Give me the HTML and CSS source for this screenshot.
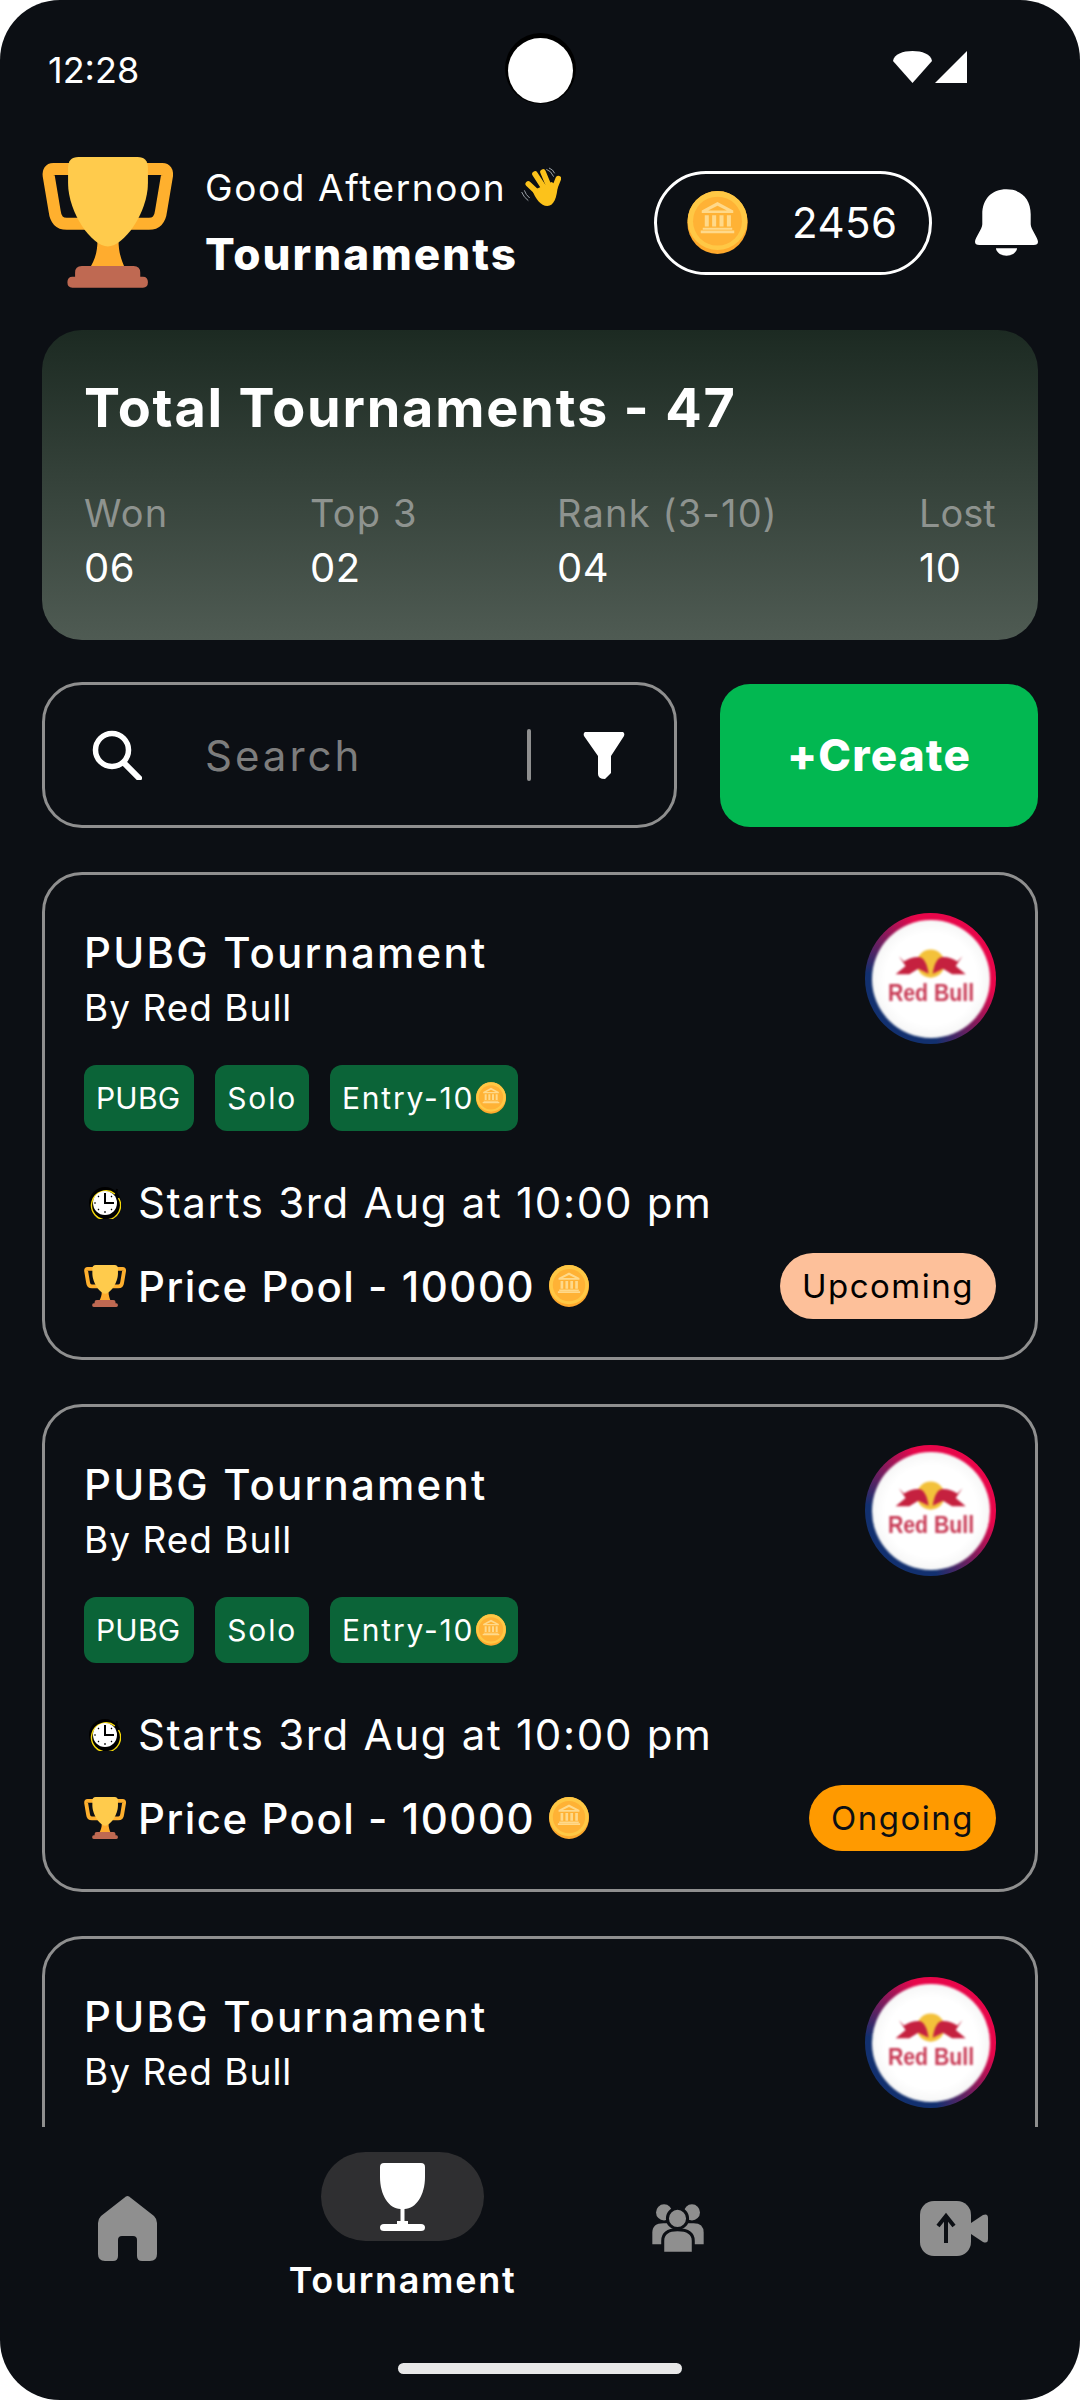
FILE: index.html
```html
<!DOCTYPE html>
<html lang="en">
<head>
<meta charset="utf-8">
<title>Tournaments</title>
<link rel="stylesheet" href="styles.css">
</head>
<body>
<svg class="defs" width="0" height="0" aria-hidden="true">
  <symbol id="trophy" viewBox="66 52 392 392">
    <path class="t-handle" d="M160 88H100Q84 88 86 108L104 215Q108 252 140 252H210"/>
    <path class="t-handle" d="M366 88H426Q442 88 440 108L422 215Q418 252 386 252H316"/>
    <path fill="#ffac2e" d="M232 300H295C295 340 305 365 315 385H208C222 365 232 340 232 300Z"/>
    <path fill="#ffcb4c" d="M175 52H352Q383 52 383 85V130C383 220 310 320 263 320C216 320 144 220 144 130V85Q144 52 175 52Z"/>
    <path fill="#bf6952" d="M185 378H340Q360 378 360 398V410H368Q383 410 383 427Q383 443 368 443H157Q142 443 142 427Q142 410 157 410H165V398Q165 378 185 378Z"/>
  </symbol>
  <symbol id="coin" viewBox="0 0 180 188">
    <ellipse cx="90" cy="94" rx="90" ry="94" fill="#ffa92c"/>
    <ellipse cx="90" cy="88" rx="89" ry="88" fill="#ffc845"/>
    <circle cx="90" cy="90" r="73" fill="#ffb235"/>
    <path fill="#ffd98a" d="M90 33L137 58V66H43V58ZM90 44L62 58H118Z"/>
    <path fill="#ffd98a" d="M52 72H64V106H52ZM74 72H86V106H74ZM96 72H108V106H96ZM118 72H130V106H118ZM46 110H134V116H46ZM40 118H140V126H40Z"/>
  </symbol>
  <symbol id="clock" viewBox="0 0 32 33">
    <circle cx="16" cy="17" r="16" fill="#000"/>
    <path d="M26 8A14.500 14.500 0 1 0 29.500 12" fill="none" stroke="#f5d90a" stroke-width="1.400"/>
    <path d="M27 9L28 3" stroke="#000" stroke-width="2"/>
    <circle cx="16" cy="17" r="12" fill="#fff"/>
    <path d="M16 7V17H25" fill="none" stroke="#000" stroke-width="2"/>
    <path d="M16 25v2M5 17h2M9 10l1 1M23 10l-1 1M9 24l1-1M23 24l-1-1" stroke="#000" stroke-width="1.200"/>
  </symbol>
  <symbol id="bulls" viewBox="64.500 59.500 353 353">
    <circle cx="240" cy="190" r="42" fill="#f3c13a"/>
    <path fill="#c5213f" d="M135 222L165 197L145 168L160 184Q178 170 203 170Q226 170 234 220L203 205L176 222Z"/>
    <path fill="#c5213f" d="M345 222L315 197L335 168L320 184Q302 170 277 170Q254 170 246 220L277 205L304 222Z"/>
  </symbol>
</svg>

<main class="screen">
  <div class="status">
    <span class="time">12:28</span>
    <span class="camera"></span>
    <div class="status-icons">
      <svg class="wifi" viewBox="0 0 39 32"><path fill="#fff" d="M0 10C1 3 10 0 19.500 0C29 0 38 3 39 10L19.500 32Z"/></svg>
      <svg class="signal" viewBox="0 0 32 32"><path fill="#fff" d="M32 0V32H0Z"/></svg>
    </div>
  </div>

  <header class="header">
    <svg class="hero-trophy"><use href="#trophy"/></svg>
    <div class="greet">
      <div class="greet-line">
        <span>Good Afternoon</span>
        <svg class="hand" viewBox="36 25 120 120">
          <g stroke="#fcc21b" stroke-width="17" stroke-linecap="round" fill="none">
            <path d="M58 76L92 108"/>
            <path d="M78 46L108 92"/>
            <path d="M102 40L122 88"/>
            <path d="M148 60L132 100"/>
          </g>
          <path fill="#fcc21b" d="M80 92L128 70L146 82C144 115 135 142 115 142C95 142 80 120 72 100Z"/>
          <path d="M38 100Q44 116 58 126M46 95Q50 108 62 118M112 32Q126 36 134 54M120 28Q132 32 137 44" fill="none" stroke="#9aa0a6" stroke-width="3"/>
        </svg>
      </div>
      <div class="greet-title">Tournaments</div>
    </div>
    <div class="balance">
      <svg class="balance-coin"><use href="#coin"/></svg>
      <span class="balance-value">2456</span>
    </div>
    <svg class="bell" viewBox="945 120 190 200"><path fill="#fff" d="M1040 120C1085 120 1113 150 1113 195V225C1113 240 1135 265 1135 278Q1135 288 1122 288H958Q945 288 945 278C945 265 967 240 967 225V195C967 150 995 120 1040 120ZM1008 298H1072C1070 312 1056 320 1040 320C1024 320 1010 312 1008 298Z"/></svg>
  </header>

  <section class="stats">
    <h1 class="stats-title">Total Tournaments - 47</h1>
    <div class="stats-grid">
      <div><div class="stat-label">Won</div><div class="stat-value">06</div></div>
      <div><div class="stat-label">Top 3</div><div class="stat-value">02</div></div>
      <div><div class="stat-label">Rank (3-10)</div><div class="stat-value">04</div></div>
      <div><div class="stat-label stat-tight">Lost</div><div class="stat-value">10</div></div>
    </div>
  </section>

  <div class="tools">
    <div class="search">
      <svg class="search-icon" viewBox="0 0 50 50"><circle cx="20" cy="20" r="16.500" fill="none" stroke="#fff" stroke-width="5.500"/><path d="M32 33L47 48" stroke="#fff" stroke-width="6" stroke-linecap="round"/></svg>
      <span class="search-text">Search</span>
      <span class="divider"></span>
      <svg class="filter" viewBox="0 0 42 47"><path fill="#fff" d="M2 0H40Q42 1 41 4L28 24V41L22 47Q15 47 15 42V24L1 4Q0 1 2 0Z"/></svg>
    </div>
    <button class="create">+Create</button>
  </div>

  <div class="list">
    <article class="card">
      <div class="card-top">
        <div>
          <div class="card-title">PUBG Tournament</div>
          <div class="card-by">By Red Bull</div>
          <div class="tags">
            <span class="tag tag-caps">PUBG</span><span class="tag">Solo</span>
            <span class="tag">Entry-10<svg class="tag-coin"><use href="#coin"/></svg></span>
          </div>
        </div>
        <div class="logo"><svg viewBox="64.500 59.500 353 353"><use href="#bulls" x="64.500" y="59.500" width="353" height="353"/><text class="logo-text" x="241" y="302" text-anchor="middle" textLength="258" lengthAdjust="spacingAndGlyphs">Red Bull</text></svg></div>
      </div>
      <div class="starts"><span class="slot"><svg class="clock"><use href="#clock"/></svg></span>Starts 3rd Aug at 10:00 pm</div>
      <div class="bottom">
        <div class="pool"><span class="slot"><svg class="mini-trophy"><use href="#trophy"/></svg></span>Price Pool - 10000<svg class="pool-coin"><use href="#coin"/></svg></div>
        <span class="state state-up">Upcoming</span>
      </div>
    </article>

    <article class="card">
      <div class="card-top">
        <div>
          <div class="card-title">PUBG Tournament</div>
          <div class="card-by">By Red Bull</div>
          <div class="tags">
            <span class="tag tag-caps">PUBG</span><span class="tag">Solo</span>
            <span class="tag">Entry-10<svg class="tag-coin"><use href="#coin"/></svg></span>
          </div>
        </div>
        <div class="logo"><svg viewBox="64.500 59.500 353 353"><use href="#bulls" x="64.500" y="59.500" width="353" height="353"/><text class="logo-text" x="241" y="302" text-anchor="middle" textLength="258" lengthAdjust="spacingAndGlyphs">Red Bull</text></svg></div>
      </div>
      <div class="starts"><span class="slot"><svg class="clock"><use href="#clock"/></svg></span>Starts 3rd Aug at 10:00 pm</div>
      <div class="bottom">
        <div class="pool"><span class="slot"><svg class="mini-trophy"><use href="#trophy"/></svg></span>Price Pool - 10000<svg class="pool-coin"><use href="#coin"/></svg></div>
        <span class="state state-on">Ongoing</span>
      </div>
    </article>

    <article class="card">
      <div class="card-top">
        <div>
          <div class="card-title">PUBG Tournament</div>
          <div class="card-by">By Red Bull</div>
        </div>
        <div class="logo"><svg viewBox="64.500 59.500 353 353"><use href="#bulls" x="64.500" y="59.500" width="353" height="353"/><text class="logo-text" x="241" y="302" text-anchor="middle" textLength="258" lengthAdjust="spacingAndGlyphs">Red Bull</text></svg></div>
      </div>
    </article>
  </div>

  <nav class="nav">
    <div class="nav-row">
      <div class="nav-item">
        <svg class="i-home" viewBox="0 0 59 65"><path fill="#8f8f8f" d="M29.500 0Q31 0 33 2L56 20Q59 23 59 27V58Q59 65 52 65H44Q39 65 39 60V44Q39 40 35 40H24Q20 40 20 44V60Q20 65 15 65H7Q0 65 0 58V27Q0 23 3 20L26 2Q28 0 29.500 0Z"/></svg>
      </div>
      <div class="nav-item nav-active">
        <span class="nav-pill">
          <svg class="i-cup" viewBox="0 0 45 68"><path fill="#fff" d="M4 0H41Q45 0 45 4V14C45 32 36 46 24.500 46V58H28V61H41Q45 61 45 64.500Q45 68 41 68H4Q0 68 0 64.500Q0 61 4 61H17V58H20.500V46C9 46 0 32 0 14V4Q0 0 4 0Z"/></svg>
        </span>
        <span class="nav-label">Tournament</span>
      </div>
      <div class="nav-item">
        <svg class="i-people" viewBox="37 45 153 143">
          <g fill="#8f8f8f">
            <circle cx="72" cy="70" r="24"/><circle cx="155" cy="70" r="24"/>
            <path d="M37 165V130Q37 102 70 102H160Q190 102 190 130V165Z"/>
          </g>
          <g fill="#8f8f8f" stroke="#0c0f14" stroke-width="9">
            <circle cx="112" cy="88" r="30"/>
            <path d="M68 192V155Q68 122 112 122Q159 122 159 155V192Z"/>
          </g>
        </svg>
      </div>
      <div class="nav-item">
        <svg class="i-video" viewBox="0 0 68 55">
          <rect width="51" height="55" rx="14" fill="#8f8f8f"/>
          <path fill="#8f8f8f" d="M51 22L63 14Q68 12 68 17V38Q68 43 63 41L51 33Z"/>
          <path d="M26 42V16M18 25L26 15L34 25" fill="none" stroke="#0c0f14" stroke-width="4"/>
        </svg>
      </div>
    </div>
    <div class="home-bar"></div>
  </nav>
</main>
</body>
</html>
```

FILE: styles.css
```css
* { box-sizing: border-box; }
html, body { margin: 0; background: #fff; }
body { width: 1080px; height: 2400px; font-family: Inter, "Noto Sans", sans-serif; color: #fff; overflow: hidden; }
.defs { display: block; height: 0; }
.t-handle { fill: none; stroke: #ffb02e; stroke-width: 36; }

.screen { width: 1080px; height: 2400px; background: #0c0f14; border-radius: 60px; overflow: hidden; display: flex; flex-direction: column; }

.status { height: 140px; display: grid; grid-template-columns: 1fr auto 1fr; align-items: center; margin-bottom: 17px; }
.time { padding-left: 48px; font-size: 36px; }
.camera { width: 65px; height: 65px; border-radius: 50%; background: #fff; box-shadow: 0 -2px 0 3px #000; }
.status-icons { justify-self: end; align-self: start; margin-top: 51px; padding-right: 113px; display: flex; gap: 3px; }
.wifi { width: 39px; height: 32px; }
.signal { width: 32px; height: 32px; }

.header { height: 131px; margin: 0 42px; display: flex; align-items: center; }
.hero-trophy { width: 131px; height: 131px; flex: none; }
.greet { margin-left: 32px; display: flex; flex-direction: column; gap: 19px; }
.greet-line { display: flex; align-items: center; gap: 15px; height: 44px; font-size: 37px; letter-spacing: 1.600px; }
.hand { width: 40px; height: 40px; }
.greet-title { font-size: 44px; line-height: 52px; font-weight: 800; letter-spacing: 2px; }
.balance { margin-left: auto; width: 278px; height: 104px; border: 3px solid #fff; border-radius: 52px; padding-left: 30px; display: flex; align-items: center; gap: 44px; }
.balance-coin { width: 61px; height: 63px; flex: none; }
.balance-value { font-size: 42px; letter-spacing: .5px; }
.bell { width: 63px; height: 67px; margin-left: 43px; flex: none; }

.stats { margin: 42px 42px 0; height: 310px; border-radius: 40px; background: linear-gradient(180deg, #1c2a22, #4f5b53); padding: 46px 42px 0; }
.stats-title { margin: 0; font-size: 54px; line-height: 64px; font-weight: 700; letter-spacing: 1.800px; }
.stats-grid { margin-top: 51px; display: grid; grid-template-columns: 226px 247px 362px auto; }
.stat-label { font-size: 38px; line-height: 44px; color: #8e938f; letter-spacing: 1.200px; }
.stat-tight { letter-spacing: 0; }
.stat-value { margin-top: 9px; font-size: 40px; line-height: 48px; letter-spacing: .5px; }

.tools { margin: 42px 42px 0; height: 146px; display: flex; align-items: center; }
.search { width: 635px; height: 146px; flex: none; border: 3px solid #8f8f8f; border-radius: 40px; padding: 0 49px 0 47px; display: flex; align-items: center; }
.search-icon { width: 50px; height: 50px; flex: none; }
.search-text { margin-left: 63px; flex: 1; font-size: 42px; color: #7d7d7d; letter-spacing: 3px; }
.divider { width: 4px; height: 52px; background: #8f8f8f; border-radius: 2px; }
.filter { width: 42px; height: 47px; margin-left: 52px; flex: none; }
.create { margin-left: 43px; width: 318px; height: 143px; border: 0; border-radius: 30px; background: #02b851; color: #fff; font: 800 44px Inter, sans-serif; letter-spacing: 1.200px; }

.list { margin: 44px 42px 0; height: 1255px; overflow: hidden; display: flex; flex-direction: column; gap: 44px; flex: none; }
.card { height: 488px; flex: none; border: 3px solid #8f8f8f; border-radius: 40px; padding: 38px 39px 0; }
.card-top { display: flex; justify-content: space-between; }
.card-title { margin: 12px 0 0; font-size: 42px; line-height: 56px; font-weight: 500; letter-spacing: 2.200px; }
.card-by { margin: 5px 0 0; font-size: 37px; line-height: 44px; letter-spacing: 1px; }
.tags { margin-top: 35px; height: 66px; display: flex; gap: 21px; }
.tag { height: 66px; padding: 0 12px; border-radius: 12px; background: #0b6438; display: flex; align-items: center; font-size: 30px; letter-spacing: 1.800px; }
.tag-caps { padding: 0 14px 0 12px; letter-spacing: .2px; }
.tag-coin { width: 30px; height: 32px; margin-left: 2px; }
.logo { width: 131px; height: 131px; flex: none; border-radius: 50%; background: conic-gradient(#e8064a 0deg, #e8064a 100deg, #12306f 175deg, #12306f 275deg, #e8064a 345deg); display: flex; align-items: center; justify-content: center; }
.logo svg { width: 118px; height: 118px; border-radius: 50%; background: radial-gradient(circle, #fff 55%, #e6e6e6 100%); filter: blur(1.200px); }
.logo-text { font: 700 74px "Liberation Sans", sans-serif; fill: #c83a55; }

.slot { width: 54px; flex: none; display: flex; align-items: center; }
.starts { margin-top: 43px; height: 56px; display: flex; align-items: center; font-size: 42px; letter-spacing: 1.700px; }
.clock { width: 32px; height: 33px; margin-left: 5px; }
.bottom { margin-top: 23px; height: 66px; display: flex; align-items: center; justify-content: space-between; }
.pool { display: flex; align-items: center; font-size: 42px; font-weight: 500; letter-spacing: 1.500px; }
.mini-trophy { width: 42px; height: 42px; }
.pool-coin { width: 40px; height: 42px; margin-left: 14px; }
.state { height: 66px; padding: 0 22px; border-radius: 33px; display: flex; align-items: center; font-size: 33px; letter-spacing: 1.500px; color: #000; }
.state-up { background: #fdc09a; }
.state-on { background: #ff9a00; color: #0c0f14; }

.nav { flex: none; padding-top: 25px; display: flex; flex-direction: column; }
.nav-row { height: 152px; padding-left: 37px; display: grid; grid-template-columns: repeat(4, 180px); column-gap: 95.5px; }
.nav-item { display: flex; flex-direction: column; align-items: center; justify-content: center; }
.nav-active { justify-content: flex-start; }
.nav-pill { width: 163px; height: 89px; border-radius: 45px; background: #2f2f31; display: flex; align-items: center; justify-content: center; }
.nav-label { margin-top: 17px; font-size: 36px; line-height: 44px; font-weight: 600; letter-spacing: 1.700px; white-space: nowrap; }
.i-home { width: 59px; height: 65px; }
.i-cup { width: 45px; height: 68px; }
.i-people { width: 52px; height: 48px; }
.i-video { width: 68px; height: 55px; }
.home-bar { align-self: center; margin-top: 59px; width: 284px; height: 11px; border-radius: 6px; background: #e8e8e8; }
```
